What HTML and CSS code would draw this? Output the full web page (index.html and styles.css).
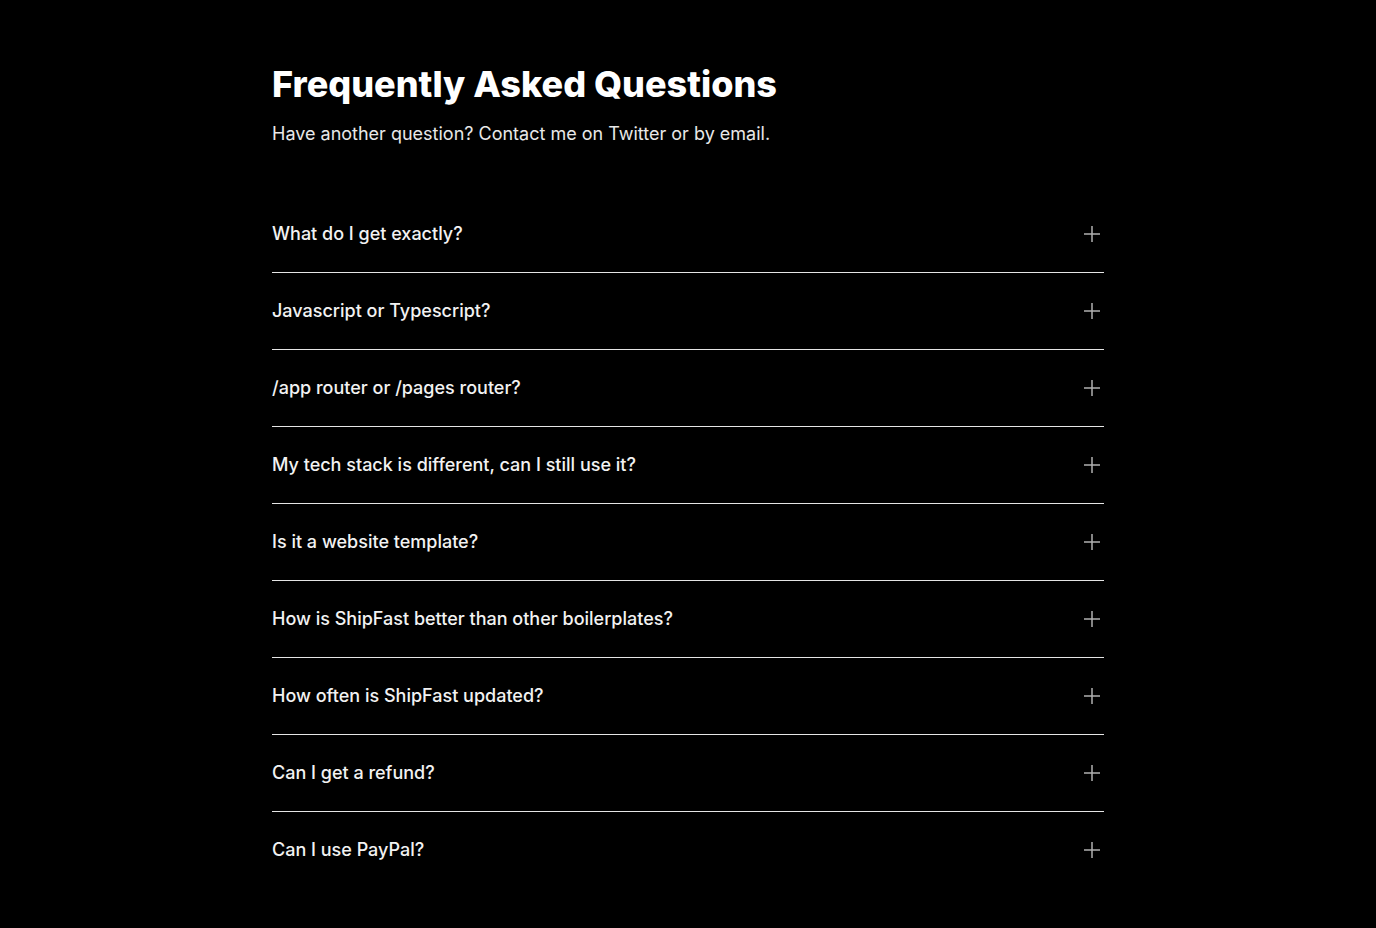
FILE: index.html
```html
<!DOCTYPE html>
<html lang="en">
<head>
<meta charset="utf-8">
<title>FAQ</title>
<link rel="stylesheet" href="styles.css">
</head>
<body>
<section class="faq">
  <header class="faq-head">
    <h1 class="faq-title">Frequently Asked Questions</h1>
    <p class="faq-sub">Have another question? Contact me on Twitter or by email.</p>
  </header>
  <ul class="faq-list">
    <li class="faq-item"><button class="faq-q"><span>What do I get exactly?</span><svg class="plus" viewBox="0 0 16 16"><path d="M8 0v16M0 8h16"/></svg></button></li>
    <li class="faq-item"><button class="faq-q"><span>Javascript or Typescript?</span><svg class="plus" viewBox="0 0 16 16"><path d="M8 0v16M0 8h16"/></svg></button></li>
    <li class="faq-item"><button class="faq-q"><span>/app router or /pages router?</span><svg class="plus" viewBox="0 0 16 16"><path d="M8 0v16M0 8h16"/></svg></button></li>
    <li class="faq-item"><button class="faq-q"><span>My tech stack is different, can I still use it?</span><svg class="plus" viewBox="0 0 16 16"><path d="M8 0v16M0 8h16"/></svg></button></li>
    <li class="faq-item"><button class="faq-q"><span>Is it a website template?</span><svg class="plus" viewBox="0 0 16 16"><path d="M8 0v16M0 8h16"/></svg></button></li>
    <li class="faq-item"><button class="faq-q"><span>How is ShipFast better than other boilerplates?</span><svg class="plus" viewBox="0 0 16 16"><path d="M8 0v16M0 8h16"/></svg></button></li>
    <li class="faq-item"><button class="faq-q"><span>How often is ShipFast updated?</span><svg class="plus" viewBox="0 0 16 16"><path d="M8 0v16M0 8h16"/></svg></button></li>
    <li class="faq-item"><button class="faq-q"><span>Can I get a refund?</span><svg class="plus" viewBox="0 0 16 16"><path d="M8 0v16M0 8h16"/></svg></button></li>
    <li class="faq-item"><button class="faq-q"><span>Can I use PayPal?</span><svg class="plus" viewBox="0 0 16 16"><path d="M8 0v16M0 8h16"/></svg></button></li>
  </ul>
</section>
</body>
</html>
```
FILE: styles.css
```css
html, body {
  margin: 0;
  padding: 0;
  background: #000;
  color: #fff;
  font-family: Inter, "Noto Sans", sans-serif;
}
.faq {
  width: 832px;
  margin: 0 auto;
  padding-top: 62px;
}
.faq-title {
  margin: 0;
  font-size: 36px;
  line-height: 44px;
  font-weight: 800;
  letter-spacing: 0;
}
.faq-sub {
  margin: 14px 0 0;
  font-size: 18px;
  line-height: 28px;
  color: #e8e8e8;
}
.faq-list {
  list-style: none;
  margin: 48px 0 0;
  padding: 0;
}
.faq-item + .faq-item {
  border-top: 1px solid #e5e5e5;
}
.faq-q {
  display: flex;
  width: 100%;
  align-items: center;
  justify-content: space-between;
  padding: 24px 0;
  background: none;
  border: 0;
  color: #f2f2f2;
  font-family: inherit;
  font-size: 18px;
  line-height: 28px;
  font-weight: 500;
  text-align: left;
  cursor: pointer;
}
.plus {
  width: 16px;
  height: 16px;
  margin-right: 4px;
  stroke: #b0b0b0;
  stroke-width: 1.5;
  fill: none;
}
```
